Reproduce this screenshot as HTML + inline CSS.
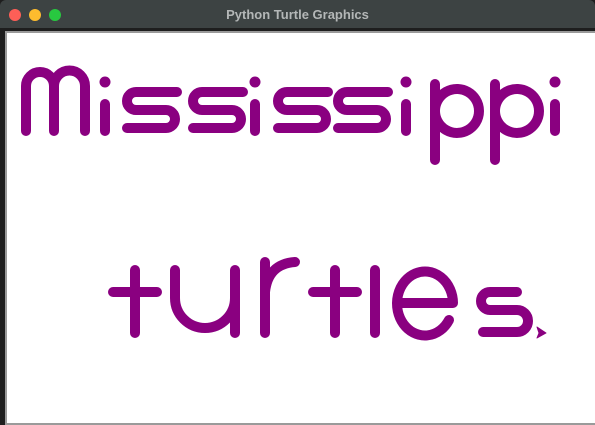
<!DOCTYPE html>
<html><head><style>
html,body{margin:0;padding:0;width:595px;height:425px;overflow:hidden;background:#1e1e1e;font-family:"Liberation Sans",sans-serif}
.tb{position:absolute;left:0;top:0;width:595px;height:28px;background:#3d4343;border-radius:6px 6px 0 0}
.tt{position:absolute;left:0;width:595px;top:7px;text-align:center;color:#b4b7b7;font-weight:bold;font-size:13px}
.d{position:absolute;top:9px;width:12px;height:12px;border-radius:50%}
.fr{position:absolute;left:5px;top:31px;width:590px;height:394px;background:#9a9a9a}
.cv{position:absolute;left:7px;top:33px;width:588px;height:390px;background:#fff}
</style></head><body>
<div class="tb"><div class="d" style="left:9px;background:#fe5f57"></div><div class="d" style="left:29px;background:#febc2e"></div><div class="d" style="left:49px;background:#28c840"></div><div class="tt">Python Turtle Graphics</div></div>
<div class="fr"></div><div class="cv"></div>
<svg width="595" height="425" style="position:absolute;left:0;top:0" fill="none" stroke="#8a0080" stroke-width="10" stroke-linecap="round" stroke-linejoin="round">
<path d="M26,131 V86 A14,14 0 0 1 54,86 V131 M54,86 A15.5,15.5 0 0 1 85,86 V131"/>
<path d="M105,104 V131 M255,104 V131 M406,104 V131 M555,104 V131"/>
<g stroke-width="0" fill="#8a0080"><circle cx="105" cy="82" r="5.5"/><circle cx="255" cy="82" r="5.5"/><circle cx="406" cy="82" r="5.5"/><circle cx="555" cy="82" r="5.5"/></g>
<g id="s"><path d="M177,92 H136 A9,9 0 0 0 136,110 H166 A9,9 0 0 1 166,128 H127"/></g>
<use href="#s" x="66"/><use href="#s" x="151"/><use href="#s" x="211"/>
<path d="M435,84 V160 M435,111 A22,22 0 1 0 435,110.9"/>
<path d="M495,84 V160 M495,111 A22,22 0 1 0 495,110.9"/>
<path d="M135,270 V333 M113,292 H157"/>
<path d="M175,270 V298 A30,30 0 0 0 235,298 M235,270 V333"/>
<path d="M265,262 V333 M265,292 Q268,264 295,262"/>
<path d="M335,270 V333 M313,292 H357"/>
<path d="M375,270 V333"/>
<path d="M398,303 H453 A28,32 0 1 0 449,320"/>
<path d="M517,292 H490 A9,9 0 0 0 490,310 H517 A11,11 0 0 1 517,332 H483"/>
<path d="M537,327 L546,333 L537,338 L539,333 Z" stroke-width="1" fill="#8a0080"/>
</svg>
</body></html>
